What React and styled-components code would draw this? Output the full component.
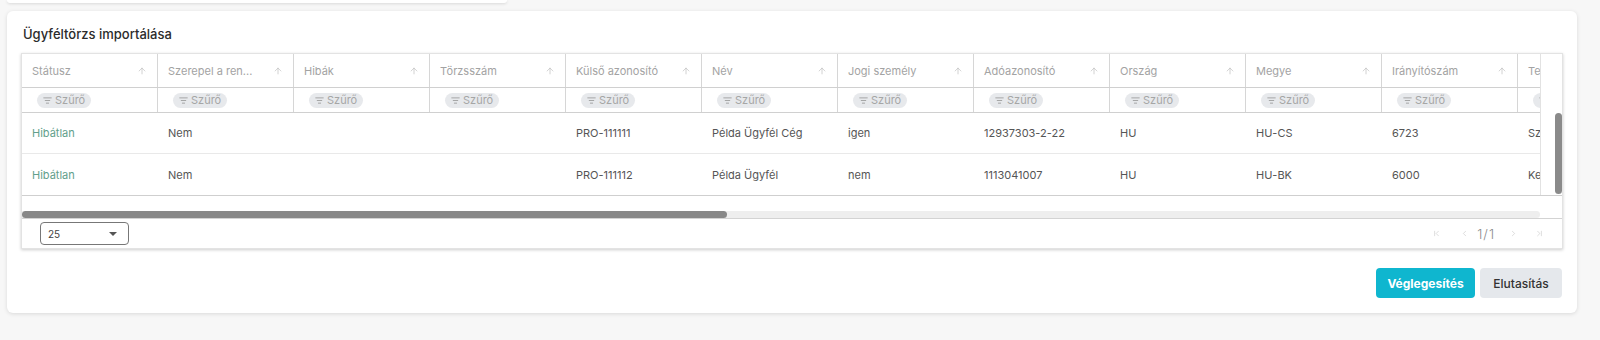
import React from 'react';
import styled, { createGlobalStyle } from 'styled-components';
import { ArrowUp, ListFilter, ChevronFirst, ChevronLeft, ChevronRight, ChevronLast } from 'lucide-react';

const Global = createGlobalStyle`
  html, body { margin: 0; padding: 0; background: #f7f7f7; }
  body { font-family: "Inter", "Noto Sans", sans-serif; }
  * { box-sizing: border-box; }
`;

const Page = styled.div`
  width: 1600px;
  height: 340px;
  padding: 0 23px 0 7px;
  display: flex;
  flex-direction: column;
  overflow: hidden;
`;

const PrevCard = styled.div`
  width: 500px;
  height: 3px;
  background: #fff;
  border-radius: 0 0 6px 6px;
  box-shadow: 0 1px 3px rgba(0, 0, 0, 0.12);
`;

const Card = styled.section`
  margin-top: 8px;
  background: #fff;
  border-radius: 6px;
  box-shadow: 0 1px 4px rgba(0, 0, 0, 0.12);
  padding: 13px 14px 15px;
  display: flex;
  flex-direction: column;
`;

const Title = styled.h2`
  margin: 0;
  height: 20px;
  line-height: 20px;
  font-size: 13px;
  font-weight: 500;
  color: #2b2b2b;
  padding-left: 2px;
`;

const Table = styled.div`
  margin-top: 9px;
  border: 1px solid #e3e3e3;
  box-shadow: 0 1px 3px rgba(0, 0, 0, 0.2);
  display: flex;
  flex-direction: column;
`;

const TopSection = styled.div`
  display: flex;
  border-bottom: 1px solid #cfcfcf;
`;

const GridArea = styled.div`
  flex: 1;
  overflow: hidden;
`;

const Row = styled.div`
  display: grid;
  grid-template-columns: repeat(12, 136px);
  height: ${(p) => p.$h}px;
  border-bottom: ${(p) => (p.$line ? `1px solid ${p.$line}` : 'none')};
`;

const HeadCell = styled.div`
  display: flex;
  align-items: center;
  justify-content: space-between;
  padding: 0 10px;
  border-right: 1px solid #d6d6d6;
  font-size: 11px;
  color: #a3a3a3;
  white-space: nowrap;
  overflow: hidden;
  svg { flex-shrink: 0; color: #b8b8b8; }
`;

const FilterCell = styled.div`
  display: flex;
  align-items: center;
  padding: 0 15px;
  border-right: 1px solid #d6d6d6;
  overflow: hidden;
`;

const Chip = styled.span`
  display: inline-flex;
  align-items: center;
  gap: 3px;
  height: 15px;
  padding: 0 6px;
  border-radius: 8px;
  background: #e7e9ec;
  color: #a6a6a6;
  font-size: 11px;
  white-space: nowrap;
  svg { color: #909090; }
`;

const Cell = styled.div`
  display: flex;
  align-items: center;
  padding: 0 10px;
  font-size: 11px;
  color: ${(p) => (p.$ok ? '#62a08b' : '#555555')};
  white-space: nowrap;
  overflow: hidden;
`;

const Gutter = styled.div`
  width: 22px;
  border-left: 1px solid #e2e2e2;
  display: flex;
  justify-content: flex-end;
  padding-top: 59px;
`;

const VThumb = styled.div`
  width: 7px;
  height: 81px;
  border-radius: 4px;
  background: #8a8a8a;
`;

const HScroll = styled.div`
  height: 22px;
  padding: 15px 22px 0 0;
`;

const HTrack = styled.div`
  height: 7px;
  background: #eeeeee;
  border-radius: 0 4px 4px 0;
`;

const HThumb = styled.div`
  width: ${(p) => p.$w}px;
  height: 7px;
  border-radius: 4px;
  background: #888888;
`;

const Footer = styled.div`
  height: 30px;
  border-top: 1px solid #d3d3d3;
  display: flex;
  align-items: center;
  justify-content: space-between;
  padding: 0 18px;
`;

const Select = styled.div`
  width: 89px;
  height: 23px;
  border: 1px solid #777;
  border-radius: 4px;
  display: flex;
  align-items: center;
  justify-content: space-between;
  padding: 0 11px 0 7px;
  font-size: 10px;
  color: #444;
`;

const Caret = styled.span`
  width: 0;
  height: 0;
  border-left: 4px solid transparent;
  border-right: 4px solid transparent;
  border-top: 4px solid #555;
`;

const Pager = styled.div`
  display: flex;
  align-items: center;
  color: #c4c4c4;
  svg { flex-shrink: 0; }
`;

const PagerGap = styled.span`
  display: inline-block;
  width: ${(p) => p.$w}px;
`;

const PageText = styled.span`
  font-size: 13px;
  font-weight: 300;
  letter-spacing: 1px;
  color: #8a8a8a;
`;

const Actions = styled.div`
  margin-top: 19px;
  display: flex;
  justify-content: flex-end;
  gap: 5px;
  padding-right: 1px;
`;

const Button = styled.button`
  height: 30px;
  width: ${(p) => p.$w}px;
  border: none;
  border-radius: 4px;
  font-family: inherit;
  font-size: 12px;
  font-weight: ${(p) => (p.$primary ? 700 : 500)};
  color: ${(p) => (p.$primary ? '#fff' : '#333')};
  background: ${(p) => (p.$primary ? '#0fb6cf' : '#e5e8ec')};
  cursor: pointer;
`;

const columns = [
  'Státusz', 'Szerepel a ren...', 'Hibák', 'Törzsszám', 'Külső azonosító', 'Név',
  'Jogi személy', 'Adóazonosító', 'Ország', 'Megye', 'Irányítószám', 'Település',
];

const rows = [
  ['Hibátlan', 'Nem', '', '', 'PRO-111111', 'Példa Ügyfél Cég', 'igen', '12937303-2-22', 'HU', 'HU-CS', '6723', 'Szeged'],
  ['Hibátlan', 'Nem', '', '', 'PRO-111112', 'Példa Ügyfél', 'nem', '1113041007', 'HU', 'HU-BK', '6000', 'Kecskemét'],
];

export default function App() {
  return (
    <Page>
      <Global />
      <PrevCard />
      <Card>
        <Title>Ügyféltörzs importálása</Title>
        <Table>
          <TopSection>
            <GridArea>
              <Row $h={34} $line="#d0d0d0">
                {columns.map((c) => (
                  <HeadCell key={c}>
                    <span>{c}</span>
                    <ArrowUp size={10} strokeWidth={1.5} />
                  </HeadCell>
                ))}
              </Row>
              <Row $h={25} $line="#d0d0d0">
                {columns.map((c) => (
                  <FilterCell key={c}>
                    <Chip>
                      <ListFilter size={9} strokeWidth={2} />
                      Szűrő
                    </Chip>
                  </FilterCell>
                ))}
              </Row>
              {rows.map((r, i) => (
                <Row key={i} $h={41} $line={i === 0 ? '#e9e9e9' : null}>
                  {r.map((v, j) => (
                    <Cell key={j} $ok={j === 0}>{v}</Cell>
                  ))}
                </Row>
              ))}
            </GridArea>
            <Gutter>
              <VThumb />
            </Gutter>
          </TopSection>
          <HScroll>
            <HTrack>
              <HThumb $w={705} />
            </HTrack>
          </HScroll>
          <Footer>
            <Select>
              <span>25</span>
              <Caret />
            </Select>
            <Pager>
              <ChevronFirst size={9} strokeWidth={1.5} />
              <PagerGap $w={19} />
              <ChevronLeft size={9} strokeWidth={1.5} />
              <PagerGap $w={8} />
              <PageText>1/1</PageText>
              <PagerGap $w={14} />
              <ChevronRight size={9} strokeWidth={1.5} />
              <PagerGap $w={17} />
              <ChevronLast size={9} strokeWidth={1.5} />
            </Pager>
          </Footer>
        </Table>
        <Actions>
          <Button $primary $w={99}>Véglegesítés</Button>
          <Button $w={82}>Elutasítás</Button>
        </Actions>
      </Card>
    </Page>
  );
}
